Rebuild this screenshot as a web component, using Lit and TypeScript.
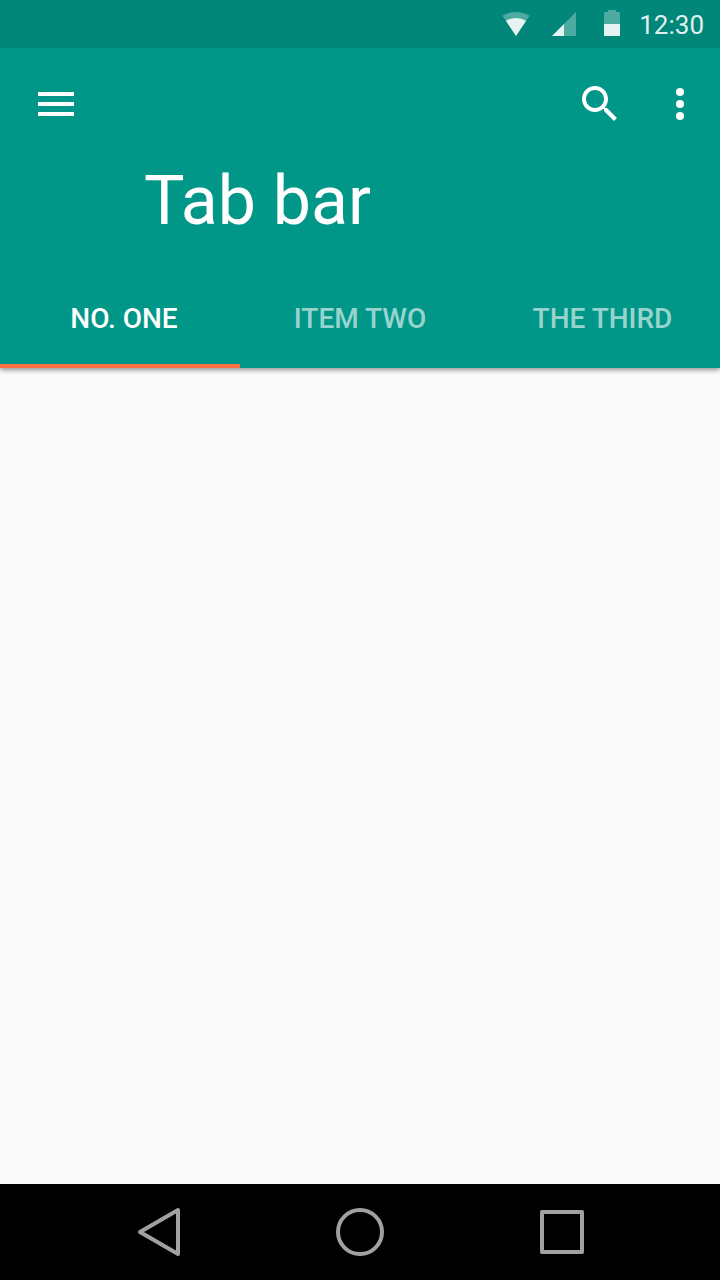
import { LitElement, html, css } from "lit";
import { customElement, state } from "lit/decorators.js";
import { classMap } from "lit/directives/class-map.js";

@customElement("status-bar")
class StatusBar extends LitElement {
  static styles = css`
    :host {
      display: flex;
      justify-content: flex-end;
      align-items: center;
      height: 48px;
      padding-right: 16px;
      background: #008779;
      color: rgba(255, 255, 255, 0.9);
    }
    svg { display: block; width: 48px; height: 48px; fill: #fff; flex: none; }
    .time { width: 68px; text-align: right; font-size: 26px; line-height: 48px; padding-top: 2px; }
    .dim { opacity: 0.3; }
    .lit { opacity: 0.86; }
  `;
  render() {
    return html`
      <svg viewBox="0 0 48 48">
        <path class="dim" d="M24 36L37.5 15.8Q31 12 24 12T10.5 15.8Z" />
        <path class="lit" d="M24 36L34.1 20.8Q29.5 18 24 18T13.9 20.8Z" />
      </svg>
      <svg viewBox="0 0 48 48">
        <path class="dim" d="M12 36L36 12V36Z" />
        <path class="lit" d="M12 36L24 24V36Z" />
      </svg>
      <svg viewBox="0 0 48 48">
        <path class="dim" d="M16 24V13.5Q16 12 17.5 12H20V10H28V12H30.5Q32 12 32 13.5V36H16Z" />
        <path class="lit" d="M16 24H32V34.8Q32 36 30.8 36H17.2Q16 36 16 34.8Z" />
      </svg>
      <span class="time">12:30</span>
    `;
  }
}

@customElement("nav-bar")
class NavBar extends LitElement {
  static styles = css`
    :host {
      display: grid;
      grid-template-columns: repeat(3, 202px);
      justify-content: center;
      height: 96px;
      background: #000;
      box-sizing: border-box;
    }
    svg {
      display: block;
      width: 64px;
      height: 96px;
      margin: 0 auto;
      fill: none;
      stroke: #a1a1a1;
      stroke-width: 4;
      stroke-linejoin: round;
    }
  `;
  render() {
    return html`
      <svg viewBox="0 0 64 96"><path d="M14 48L52 26V70Z" /></svg>
      <svg viewBox="0 0 64 96"><circle cx="32" cy="48" r="22" /></svg>
      <svg viewBox="0 0 64 96"><rect x="12" y="28" width="40" height="40" /></svg>
    `;
  }
}

@customElement("app-root")
class AppRoot extends LitElement {
  static styles = css`
    :host {
      display: flex;
      flex-direction: column;
      height: 100vh;
      font-family: Roboto, sans-serif;
      background: #fafafa;
      overflow: hidden;
    }
    status-bar { z-index: 1; }
    header {
      display: flex;
      flex-direction: column;
      height: 320px;
      background: #009788;
      color: #fff;
      box-shadow: 0 2px 5px rgba(0, 0, 0, 0.42);
    }
    .toolbar {
      display: flex;
      align-items: center;
      height: 112px;
      padding: 0 16px 0 32px;
    }
    .toolbar svg { display: block; width: 48px; height: 48px; fill: #fff; }
    .spacer { flex: 1; }
    .more { margin-left: 32px; }
    h1 {
      margin: 0;
      padding-left: 144px;
      height: 112px;
      font-size: 68px;
      font-weight: 400;
      line-height: 82px;
    }
    .tabs { display: grid; grid-template-columns: repeat(3, 240px); height: 96px; }
    .tab {
      all: unset;
      box-sizing: border-box;
      height: 96px;
      padding: 0 0 0 8px;
      border-bottom: 4px solid transparent;
      font-size: 28px;
      font-weight: 500;
      line-height: 93px;
      text-align: center;
      white-space: nowrap;
      color: rgba(255, 255, 255, 0.6);
    }
    .tab:nth-child(2) { padding: 0; }
    .tab:nth-child(3) { padding: 0 0 0 5px; }
    .active { color: #fff; border-bottom-color: #ff7043; }
    main { flex: 1; }
  `;

  @state() private selected = 0;
  private labels = ["NO. ONE", "ITEM TWO", "THE THIRD"];

  render() {
    return html`
      <status-bar></status-bar>
      <header>
        <div class="toolbar">
          <svg viewBox="0 0 24 24"><path d="M3 18h18v-2H3zM3 13h18v-2H3zM3 6v2h18V6z" /></svg>
          <span class="spacer"></span>
          <svg viewBox="0 0 24 24">
            <path d="M15.5 14h-.79l-.28-.27C15.41 12.59 16 11.11 16 9.5 16 5.91 13.09 3 9.5 3S3 5.91 3 9.5 5.91 16 9.5 16c1.61 0 3.09-.59 4.23-1.57l.27.28v.79l5 4.99L20.49 19l-4.99-5zm-6 0C7.01 14 5 11.99 5 9.5S7.01 5 9.5 5 14 7.01 14 9.5 11.99 14 9.5 14z" />
          </svg>
          <svg class="more" viewBox="0 0 24 24">
            <circle cx="12" cy="6" r="2" /><circle cx="12" cy="12" r="2" /><circle cx="12" cy="18" r="2" />
          </svg>
        </div>
        <h1>Tab bar</h1>
        <div class="tabs" role="tablist">
          ${this.labels.map(
            (label, i) => html`<button
              role="tab"
              class=${classMap({ tab: true, active: i === this.selected })}
              @click=${() => (this.selected = i)}
            >${label}</button>`
          )}
        </div>
      </header>
      <main></main>
      <nav-bar></nav-bar>
    `;
  }
}
